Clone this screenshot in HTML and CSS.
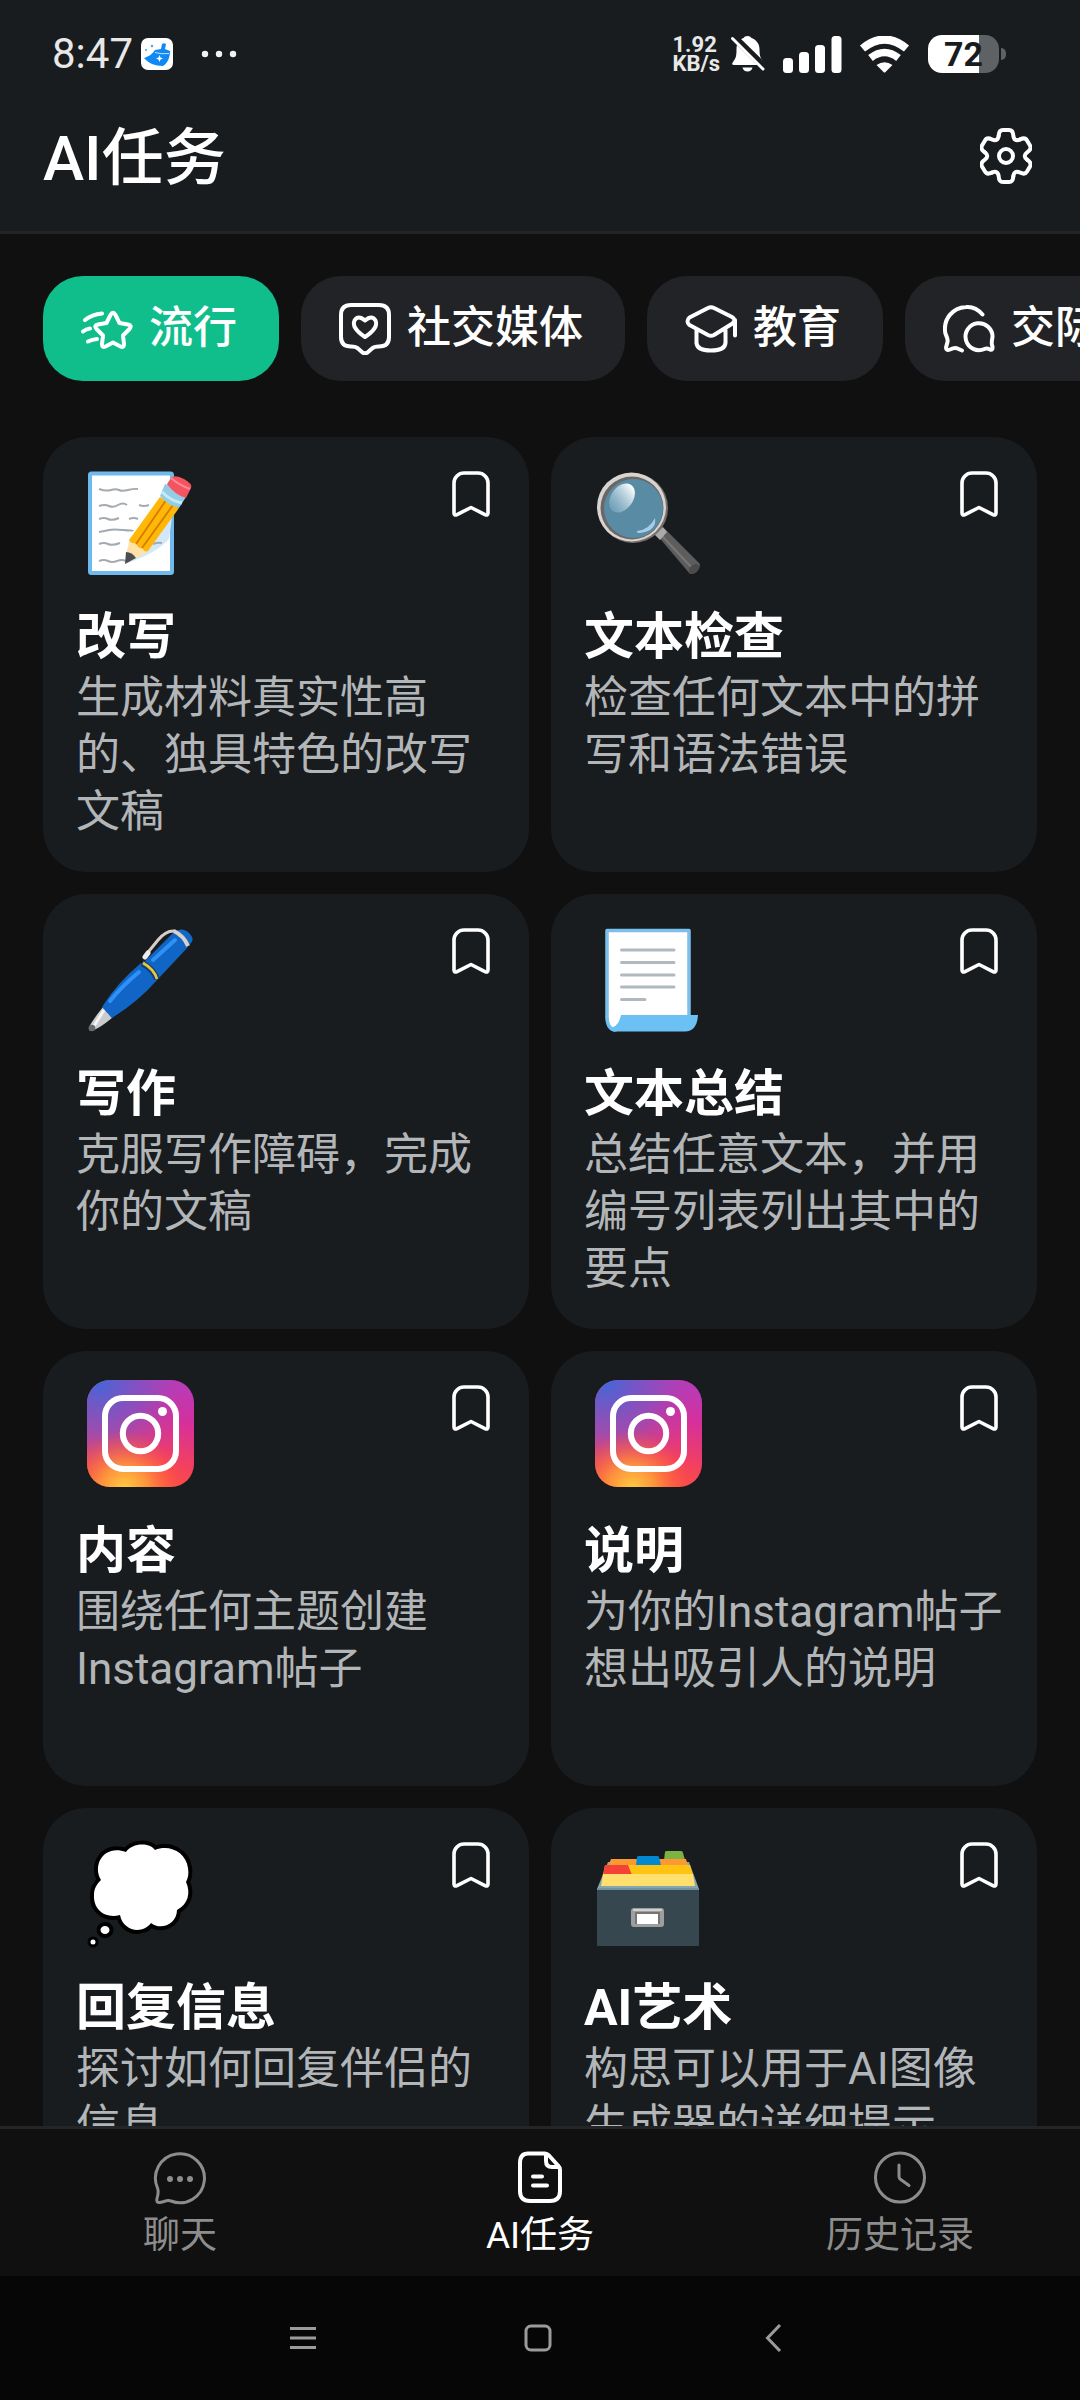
FILE: index.html
```html
<!DOCTYPE html>
<html lang="zh-CN">
<head>
<meta charset="utf-8">
<meta name="viewport" content="width=device-width, initial-scale=1">
<title>AI任务</title>
<link rel="stylesheet" href="styles.css">
</head>
<body>
<svg class="defs" aria-hidden="true">
  <defs>
    <symbol id="bookmark" viewBox="0 0 38 46">
      <path d="M2 12a10 10 0 0 1 10-10h14a10 10 0 0 1 10 10v30q0 3-3 1.600L19 36.500 5 43.600Q2 45 2 42Z" fill="none" stroke="#fff" stroke-width="3.600" stroke-linejoin="round"/>
    </symbol>
    <radialGradient id="ig-blue" cx="0.100" cy="0" r="1.100">
      <stop offset="0" stop-color="#4168d8"/><stop offset="0.450" stop-color="#8a4fc0" stop-opacity="0.800"/><stop offset="0.900" stop-color="#d62fa0" stop-opacity="0"/>
    </radialGradient>
    <linearGradient id="ig-base" x1="0.300" y1="1" x2="0.700" y2="0">
      <stop offset="0" stop-color="#ff5a35"/><stop offset="0.350" stop-color="#f5425a"/><stop offset="0.750" stop-color="#d62f9c"/><stop offset="1" stop-color="#bb3ab8"/>
    </linearGradient>
    <radialGradient id="ig-warm" cx="0.350" cy="1.020" r="0.550">
      <stop offset="0" stop-color="#ffd040"/><stop offset="0.400" stop-color="#ff9a3c" stop-opacity="0.900"/><stop offset="1" stop-color="#ff5038" stop-opacity="0"/>
    </radialGradient>
    <symbol id="instagram" viewBox="0 0 107 112">
      <rect width="107" height="107" rx="23" fill="url(#ig-base)"/>
      <rect width="107" height="107" rx="23" fill="url(#ig-blue)"/>
      <rect width="107" height="107" rx="23" fill="url(#ig-warm)"/>
      <rect x="18" y="18" width="71" height="71" rx="18" fill="none" stroke="#fff" stroke-width="6"/>
      <circle cx="53.500" cy="53.500" r="17.700" fill="none" stroke="#fff" stroke-width="6"/>
      <circle cx="75.500" cy="31.500" r="4.500" fill="#fff"/>
    </symbol>
  </defs>
</svg>

<header class="header">
  <div class="status">
    <div class="status-left">
      <span class="clock">8:47</span>
      <svg width="32" height="32" viewBox="0 0 32 32" aria-hidden="true">
        <rect width="32" height="32" rx="7" fill="#fff"/>
        <path d="M3 20C9 18 12 15 14 12l6-1 1-5q2-1.500 4 0l-1 5 5 2c0 6-2 12-7 15C14 28 7 25 3 20Z" fill="#1189f5"/>
        <path d="M14 14.500q7 2 14 1" stroke="#bfe2ff" stroke-width="1" fill="none"/>
        <path d="M18.500 17l1 2.500 2.500 1-2.500 1-1 2.500-1-2.500-2.500-1 2.500-1Z" fill="#fff"/>
        <circle cx="11" cy="8" r="1.200" fill="#4aa8c8"/><circle cx="5" cy="12" r="1" fill="#4aa8c8"/>
      </svg>
      <svg class="more" width="36" height="8" viewBox="0 0 36 8" fill="#f2f2f2" aria-hidden="true"><circle cx="4" cy="4" r="3.200"/><circle cx="18" cy="4" r="3.200"/><circle cx="32" cy="4" r="3.200"/></svg>
    </div>
    <div class="status-right">
      <span class="speed">1.92<br>KB/s</span>
      <svg class="bell" width="34" height="36" viewBox="0 0 34 36" aria-hidden="true">
        <path d="M16.500 0q3 0 4 2c5 2 8 6 8 11 0 7 1 9 4 13q2 3-1 3H3q-3 0-1-3c3-4 3.500-6 3.500-13 0-5 2-9 7-11q1-2 4-2Z" fill="#fff"/>
        <path d="M11.500 31.500h10q-1 4-5 4t-5-4Z" fill="#fff"/>
        <path d="M2 0 34 31.500" stroke="#191c1e" stroke-width="7"/><path d="M1.500 2.500 32 33" stroke="#fff" stroke-width="3" stroke-linecap="round"/>
      </svg>
      <svg class="signal" width="59" height="37" viewBox="0 0 59 37" fill="#fff" aria-hidden="true"><rect y="22" width="10" height="15" rx="3.500"/><rect x="16" y="16" width="10" height="21" rx="3.500"/><rect x="32" y="9" width="10" height="28" rx="3.500"/><rect x="48.500" width="10" height="37" rx="3.500"/></svg>
      <svg class="wifi" width="51" height="37" viewBox="0 0 51 37" aria-hidden="true">
        <path d="M3.500 12.500Q25.500-5.500 47.500 12.500" fill="none" stroke="#fff" stroke-width="8"/>
        <path d="M11.500 22Q25.500 11 39.500 22" fill="none" stroke="#fff" stroke-width="7.500"/>
        <path d="M17.500 29q8-5.500 16 0l-7 7q-1 1-2 0Z" fill="#fff"/>
      </svg>
      <span class="battery"><span class="battery-level">72</span></span>
    </div>
  </div>
  <div class="titlebar">
    <h1>AI任务</h1>
    <button class="plain" aria-label="设置">
      <svg width="52" height="56" viewBox="-26 -28 52 56" fill="none" stroke="#fff" stroke-width="4" stroke-linecap="round" aria-hidden="true">
        <path id="tooth" d="M-7.300-20.500Q-7-26-3-26H3Q7-26 7.300-20.500 8-13.900 14.100-16.570"/>
        <use href="#tooth" transform="rotate(60)"/><use href="#tooth" transform="rotate(120)"/><use href="#tooth" transform="rotate(180)"/><use href="#tooth" transform="rotate(240)"/><use href="#tooth" transform="rotate(300)"/>
        <circle r="7"/>
      </svg>
    </button>
  </div>
</header>

<main class="content">
  <div class="chips">
    <button class="chip chip-active">
      <svg class="line-icon" viewBox="0 0 52 52" aria-hidden="true"><path d="M29.500 12Q32 7.500 34.500 12L38.500 20 47 21.500Q51.500 22.500 48.500 26L42 32.500 43 41Q43 45 39.500 43.500L32 39.500 24.500 43.500Q21 45 21 41L22 32.500 15.500 26Q12.500 22.500 17 21.500L25.500 20ZM4 17Q11 11.500 21 10.500M2 28.500Q5 26 9 25.500M7 38.500Q11 36.500 16 36"/></svg>
      流行
    </button>
    <button class="chip">
      <svg class="line-icon" viewBox="0 0 52 52" aria-hidden="true"><path d="M12 2H40Q50 2 50 12V34Q50 43.500 40 43.500 35 43.500 33 45.500L28.500 49.500Q26 51 23.500 49.500L19 45.500Q17 43.500 12 43.500 2 43.500 2 34V12Q2 2 12 2Z"/><path d="M26 17.500Q19 11.500 15.500 17.500C13 23 17 28 26 34 35 28 39 23 36.500 17.500Q33 11.500 26 17.500Z"/></svg>
      社交媒体
    </button>
    <button class="chip">
      <svg class="line-icon" viewBox="0 0 52 52" aria-hidden="true"><path d="M23 5Q26 3.500 29 5L47 14Q51.500 16.500 47.500 20.500L29 32Q26 33.500 23 32L4.500 22Q.5 18 4.500 14.500ZM50 17V32.500M11.500 27V40Q12 47.500 26 47.500T40.500 40V27"/></svg>
      教育
    </button>
    <button class="chip">
      <svg class="line-icon" viewBox="0 0 52 52" aria-hidden="true"><path d="M39.500 11.500C34 5 28 3.500 23 4 9 5 1 16 2 28 2 32 5.500 35 4.500 39L3 44.500Q3 48 7 46.500 12 44 14.500 45.500L19 47.500"/><path d="M49.500 34A13.500 13.500 0 1 0 41.500 46Q44 45 47 46.500 50 47.500 49.500 43.500 48 41 49.500 34Z"/></svg>
      交际
    </button>
  </div>

  <div class="grid">
    <article class="card">
      <div class="card-top">
        <svg class="art" viewBox="0 0 107 112" aria-hidden="true">
          <rect x="3" y="7.500" width="82" height="99.500" rx="1.500" fill="#fff" stroke="#70b9ec" stroke-width="4"/>
          <path d="M85 52 82 73Q70 87 38 98L62 78Z" fill="#d3e7fb"/>
          <path d="M12 23q7 2.500 12 1t8 0 9 0 10-1M12 40q6-2 10 0t9-1 9 0M52 39q5 2 10 0M12 53q5-2 9 0t11-1M42 53q5-2 9 0M12 66q6-1 10-2t14 0 10 0M12 78q5-2 9 0t12-1M66 78q5-2 9-1M12 95q5-2 9 0t9 0 9 0" fill="none" stroke="#a3aab0" stroke-width="2"/>
          <path d="M43 73 39 88 46 94 60 86Z" fill="#ffe2a8"/>
          <path d="M39 86 38 98 49 92Q45 86 39 86Z" fill="#484e52"/>
          <path d="M73 31 92 42 61 85Q58 87 55 82 51 83 49 77 44 78 42 74Z" fill="#ffb708"/>
          <path d="M78.500 35 49 78M86 39 55 82" stroke="#d77b00" stroke-width="1.800"/>
          <path d="M73 30 78 18Q90 20 99 31L92 42Q80 39 73 30Z" fill="#94cce4"/><path d="M75 26Q84 35 95 37" fill="none" stroke="#c5eaf3" stroke-width="3"/>
          <path d="M80 18 84 12Q88 8 97 13T104 22L99 32Q88 29 80 18Z" fill="#f45461"/><path d="M84 12Q92 19 103 23" stroke="#ff8b91" stroke-width="2" fill="none"/>
        </svg>
        <button class="plain mark" aria-label="收藏"><svg width="38" height="46"><use href="#bookmark"/></svg></button>
      </div>
      <h2>改写</h2>
      <p>生成材料真实性高的、独具特色的改写文稿</p>
    </article>

    <article class="card">
      <div class="card-top">
        <svg class="art" viewBox="0 0 107 112" aria-hidden="true">
          <defs><linearGradient id="shine" x1="0.500" y1="0" x2="0.300" y2="1"><stop offset="0" stop-color="#fff"/><stop offset="1" stop-color="#8fb9cf" stop-opacity="0.400"/></linearGradient></defs>
          <path d="M62 69 70 63 105 98Q105 106 95 108Z" fill="#5d5d5d"/><path d="M67 70 99 104" stroke="#777" stroke-width="2"/><ellipse cx="99" cy="103" rx="6" ry="4" transform="rotate(-42 99 103)" fill="#4b4b4b"/>
          <path d="M59 68 68 61 72 66 65 74Z" fill="#aaa"/>
          <circle cx="38" cy="42" r="35" fill="#77706d"/><circle cx="36.500" cy="41" r="34.500" fill="#d7d4d2"/><circle cx="37" cy="42" r="31.500" fill="#6b6765"/><circle cx="38.500" cy="42.500" r="29.500" fill="#598ba5"/>
          <ellipse cx="27" cy="32" rx="11" ry="16" transform="rotate(35 27 32)" fill="url(#shine)"/>
          <path d="M42 65Q54 64 60 52 62 65 45 67 41 67 42 65Z" fill="#a7cde4"/>
        </svg>
        <button class="plain mark" aria-label="收藏"><svg width="38" height="46"><use href="#bookmark"/></svg></button>
      </div>
      <h2>文本检查</h2>
      <p>检查任何文本中的拼写和语法错误</p>
    </article>

    <article class="card">
      <div class="card-top">
        <svg class="art" viewBox="0 0 107 112" aria-hidden="true">
          <path d="M89 8Q96 4 102 10T104 20L99 25Z" fill="#1268c6"/>
          <path d="M16 84 25 95Q14 104 7 107 1 110 2 104 7 95 16 84Z" fill="#c9cbcc"/><path d="M17 87Q12 95 7 103" stroke="#f5f5f5" stroke-width="3"/><circle cx="5" cy="105" r="3.300" fill="#676b6d"/>
          <path d="M15 84Q30 60 54 40L71 56Q52 78 25 95Z" fill="#1065c7"/>
          <path d="M56 40 87 9Q96 13 101 24L71 56Q66 46 56 40Z" fill="#1165c4"/>
          <path d="M23 78Q35 63 52 49M66 37 88 17" fill="none" stroke="#2f91f6" stroke-width="4" stroke-linecap="round"/>
          <path d="M55 40Q66 46 70 56" fill="none" stroke="#143e81" stroke-width="6"/><path d="M56 40Q67 46 70 56" fill="none" stroke="#eacb2c" stroke-width="2.600"/>
          <path d="M87 8Q97 13 101 23" fill="none" stroke="#d9d1cb" stroke-width="4"/><path d="M58 33 71 17Q79 7 88 8" fill="none" stroke="#d8cdc7" stroke-width="3"/><path d="M58 34 61 30" stroke="#eee" stroke-width="5" stroke-linecap="round"/>
        </svg>
        <button class="plain mark" aria-label="收藏"><svg width="38" height="46"><use href="#bookmark"/></svg></button>
      </div>
      <h2>写作</h2>
      <p>克服写作障碍，完成你的文稿</p>
    </article>

    <article class="card">
      <div class="card-top">
        <svg class="art" viewBox="0 0 107 112" aria-hidden="true">
          <path d="M12 7.500H94V95H28Q26 107 19 107 12 105 12 93Z" fill="#fff" stroke="#7bc0ec" stroke-width="3.500" stroke-linejoin="round"/>
          <path d="M26 92H103Q102 108.500 90 108.500H20Q10 107 10.500 92 13 105 18 104 24 102 26 92Z" fill="#6bc0f4"/>
          <path d="M26.500 27H79M26.500 39.500H79M26.500 52H79M26.500 64H79M26.500 76.500H50" stroke="#b0b9bf" stroke-width="3" stroke-linecap="round"/>
        </svg>
        <button class="plain mark" aria-label="收藏"><svg width="38" height="46"><use href="#bookmark"/></svg></button>
      </div>
      <h2>文本总结</h2>
      <p>总结任意文本，并用编号列表列出其中的要点</p>
    </article>

    <article class="card">
      <div class="card-top">
        <svg class="art" aria-hidden="true"><use href="#instagram"/></svg>
        <button class="plain mark" aria-label="收藏"><svg width="38" height="46"><use href="#bookmark"/></svg></button>
      </div>
      <h2>内容</h2>
      <p>围绕任何主题创建Instagram帖子</p>
    </article>

    <article class="card">
      <div class="card-top">
        <svg class="art" aria-hidden="true"><use href="#instagram"/></svg>
        <button class="plain mark" aria-label="收藏"><svg width="38" height="46"><use href="#bookmark"/></svg></button>
      </div>
      <h2>说明</h2>
      <p>为你的Instagram帖子想出吸引人的说明</p>
    </article>

    <article class="card">
      <div class="card-top">
        <svg class="art" viewBox="0 0 107 112" aria-hidden="true">
          <path d="M39 15C45 6 62 5 68 13 82 7 99 15 101 31 102 37 101 41 99 45 104 56 101 67 90 73 90 87 74 94 64 86 55 98 36 94 33 78 19 82 6 73 7 58 7 51 10 47 14 43 5 28 17 7 39 15Z" fill="#fff" stroke="#000" stroke-width="8" stroke-linejoin="round" paint-order="stroke"/>
          <ellipse cx="18" cy="93" rx="6.500" ry="6" fill="#fff" stroke="#000" stroke-width="4"/><circle cx="6" cy="105" r="4" fill="#fff" stroke="#000" stroke-width="3"/>
        </svg>
        <button class="plain mark" aria-label="收藏"><svg width="38" height="46"><use href="#bookmark"/></svg></button>
      </div>
      <h2>回复信息</h2>
      <p>探讨如何回复伴侣的信息</p>
    </article>

    <article class="card">
      <div class="card-top">
        <svg class="art" viewBox="0 0 107 112" aria-hidden="true">
          <path d="M2 52 13 25H94L104 52Z" fill="#86a5ae"/>
          <path d="M69 23 70 15Q70 14 72 14H86Q88 14 88 16L90 23Z" fill="#7cb342"/>
          <path d="M16 22H91L94 32H12Z" fill="#fb9a32"/>
          <path d="M10 28H95L98 38H8Z" fill="#ffc413"/><path d="M10 28H33L37 38H8Z" fill="#f44336"/>
          <path d="M41 28 42 20Q42 19 44 19H62Q64 19 64 20L66 28Z" fill="#0288d1"/>
          <path d="M8 37H98L100 49H6Z" fill="#ffe06e"/>
          <rect x="2" y="51" width="102" height="58" rx="1" fill="#37474f"/><path d="M2 52H104" stroke="#6f929e" stroke-width="2"/>
          <rect x="36" y="71" width="33" height="19" rx="3" fill="#9e9e9e"/><path d="M38 73H67" stroke="#d0d0d0" stroke-width="2"/><rect x="40" y="75" width="25" height="12" fill="#757575"/><rect x="42" y="77" width="21" height="10" fill="#fff"/>
        </svg>
        <button class="plain mark" aria-label="收藏"><svg width="38" height="46"><use href="#bookmark"/></svg></button>
      </div>
      <h2>AI艺术</h2>
      <p>构思可以用于AI图像生成器的详细提示</p>
    </article>
  </div>
</main>

<nav class="tabs">
  <a class="tab" href="#chat">
    <svg class="tab-icon" viewBox="0 0 54 54" aria-hidden="true"><path d="M4.500 37A24.500 24.500 0 1 1 18 50Q15 49 11 50.500L7 51.500Q3 52 4 47.500 6 41 4.500 37Z"/><g fill="currentColor" stroke="none"><circle cx="17" cy="28" r="3"/><circle cx="27" cy="28" r="3"/><circle cx="37" cy="28" r="3"/></g></svg>
    聊天
  </a>
  <a class="tab tab-active" href="#tasks" aria-current="page">
    <svg class="tab-icon tab-icon-bold" viewBox="0 0 54 54" aria-hidden="true"><path d="M15 2.500H32Q34 2.500 36 4.500L45 14.500Q47 16.500 47 19V40Q47 50 37 50H17Q7 50 7 40V12Q7 2.500 15 2.500ZM33 3V10Q33 16 39 16H46M20 25.500H29M20 34.500H34"/></svg>
    AI任务
  </a>
  <a class="tab" href="#history">
    <svg class="tab-icon" viewBox="0 0 54 54" aria-hidden="true"><circle cx="27" cy="26.500" r="24.500"/><path d="M26 14V25.500Q26 27 27 28L36 34.500"/></svg>
    历史记录
  </a>
</nav>

<div class="system">
  <button class="plain" aria-label="最近任务"><svg width="28" height="28" viewBox="0 0 28 28" stroke="#9b9b9b" stroke-width="3" aria-hidden="true"><path d="M1 4.500H27M1 14H27M1 23.500H27"/></svg></button>
  <button class="plain" aria-label="主屏幕"><svg width="28" height="28" viewBox="0 0 28 28" fill="none" stroke="#9b9b9b" stroke-width="3" aria-hidden="true"><rect x="2" y="2" width="24" height="24" rx="5"/></svg></button>
  <button class="plain" aria-label="返回"><svg width="28" height="28" viewBox="0 0 28 28" fill="none" stroke="#9b9b9b" stroke-width="3" aria-hidden="true"><path d="M21 1 8.500 14 21 27"/></svg></button>
</div>
</body>
</html>
```
FILE: styles.css
```css
* {
  box-sizing: border-box;
}

body {
  margin: 0;
  height: 100vh;
  display: flex;
  flex-direction: column;
  overflow: hidden;
  background: #101010;
  color: #fff;
  font-family: Roboto, "Noto Sans CJK SC", sans-serif;
}

svg {
  display: block;
  flex: none;
}

h1,
h2,
p {
  margin: 0;
}

button {
  border: 0;
  color: inherit;
  font: inherit;
}

.defs {
  position: absolute;
  width: 0;
  height: 0;
}

.plain {
  display: flex;
  justify-content: center;
  padding: 0;
  background: none;
}

/* Header */

.header {
  background: #191c1e;
  border-bottom: 3px solid #242424;
  padding-bottom: 27px;
}

.status {
  height: 108px;
  padding: 0 74px 0 52px;
  display: flex;
  align-items: center;
  justify-content: space-between;
}

.status-left,
.status-right {
  display: flex;
  align-items: center;
}

.clock {
  color: #e8e8e8;
  font-size: 42px;
  line-height: 48px;
  margin-right: 8px;
}

.more {
  margin-left: 28px;
}

.speed {
  color: #e8e8e8;
  font-size: 22px;
  font-weight: 700;
  line-height: 19px;
}

.bell {
  margin-left: 11px;
}

.signal {
  margin-left: 18px;
}

.wifi {
  margin-left: 17px;
}

.battery {
  margin-left: 18px;
  display: flex;
  align-items: center;
  gap: 2px;
}

.battery::after {
  content: "";
  width: 5px;
  height: 12px;
  border-radius: 0 6px 6px 0;
  background: #5f6265;
}

.battery-level {
  width: 71px;
  border-radius: 14px;
  background: linear-gradient(to right, #fff 72%, #5f6265 72%);
  color: #191c1e;
  font-size: 34px;
  font-weight: 700;
  line-height: 38px;
  text-align: center;
}

.titlebar {
  height: 96px;
  padding: 0 48px 20px 43px;
  display: flex;
  align-items: flex-end;
  justify-content: space-between;
}

h1 {
  font-size: 62px;
  font-weight: 500;
  line-height: 50px;
}

/* Categories */

.content {
  flex: 1;
  min-height: 0;
  overflow: hidden;
  padding: 42px 43px 0;
}

.chips {
  display: flex;
  gap: 22px;
  margin-right: -43px;
  overflow: hidden;
}

.chip {
  flex: none;
  display: flex;
  align-items: center;
  gap: 16px;
  height: 105px;
  padding: 0 42px 0 38px;
  border-radius: 40px;
  background: #222326;
  font-size: 44px;
  font-weight: 500;
  line-height: 57px;
}

.chip-active {
  background: #10be8c;
}

.line-icon {
  width: 52px;
  height: 52px;
  fill: none;
  stroke: currentColor;
  stroke-width: 4;
  stroke-linecap: round;
  stroke-linejoin: round;
}

/* Task cards */

.grid {
  display: grid;
  grid-template-columns: 1fr 1fr;
  grid-auto-rows: 1fr;
  gap: 22px;
  margin-top: 56px;
}

.card {
  padding: 29px 20px 31px 33px;
  border-radius: 43px;
  background: #191c1e;
}

.card-top {
  display: flex;
  align-items: flex-start;
  justify-content: space-between;
  padding: 0 19px 0 11px;
}

.art {
  width: 107px;
  height: 112px;
}

.mark {
  margin-top: 5px;
}

h2 {
  margin-top: 26px;
  font-size: 50px;
  font-weight: 700;
  line-height: 66px;
}

.card p {
  color: #b3b6b9;
  font-size: 44px;
  line-height: 57px;
}

/* Bottom navigation */

.tabs {
  display: flex;
  border-top: 3px solid #242526;
  background: #101010;
}

.tab {
  flex: 1;
  display: flex;
  flex-direction: column;
  align-items: center;
  gap: 9px;
  padding: 22px 0 18px;
  color: #8d8d8d;
  font-size: 37px;
  line-height: 44px;
  text-decoration: none;
}

.tab-active {
  color: #fff;
}

.tab-icon {
  width: 54px;
  height: 54px;
  fill: none;
  stroke: currentColor;
  stroke-width: 3;
  stroke-linecap: round;
  stroke-linejoin: round;
}

.tab-icon-bold {
  stroke-width: 4;
}

.system {
  height: 124px;
  padding-right: 4px;
  display: flex;
  align-items: center;
  justify-content: center;
  background: #060606;
}

.system .plain {
  width: 235px;
}
```
